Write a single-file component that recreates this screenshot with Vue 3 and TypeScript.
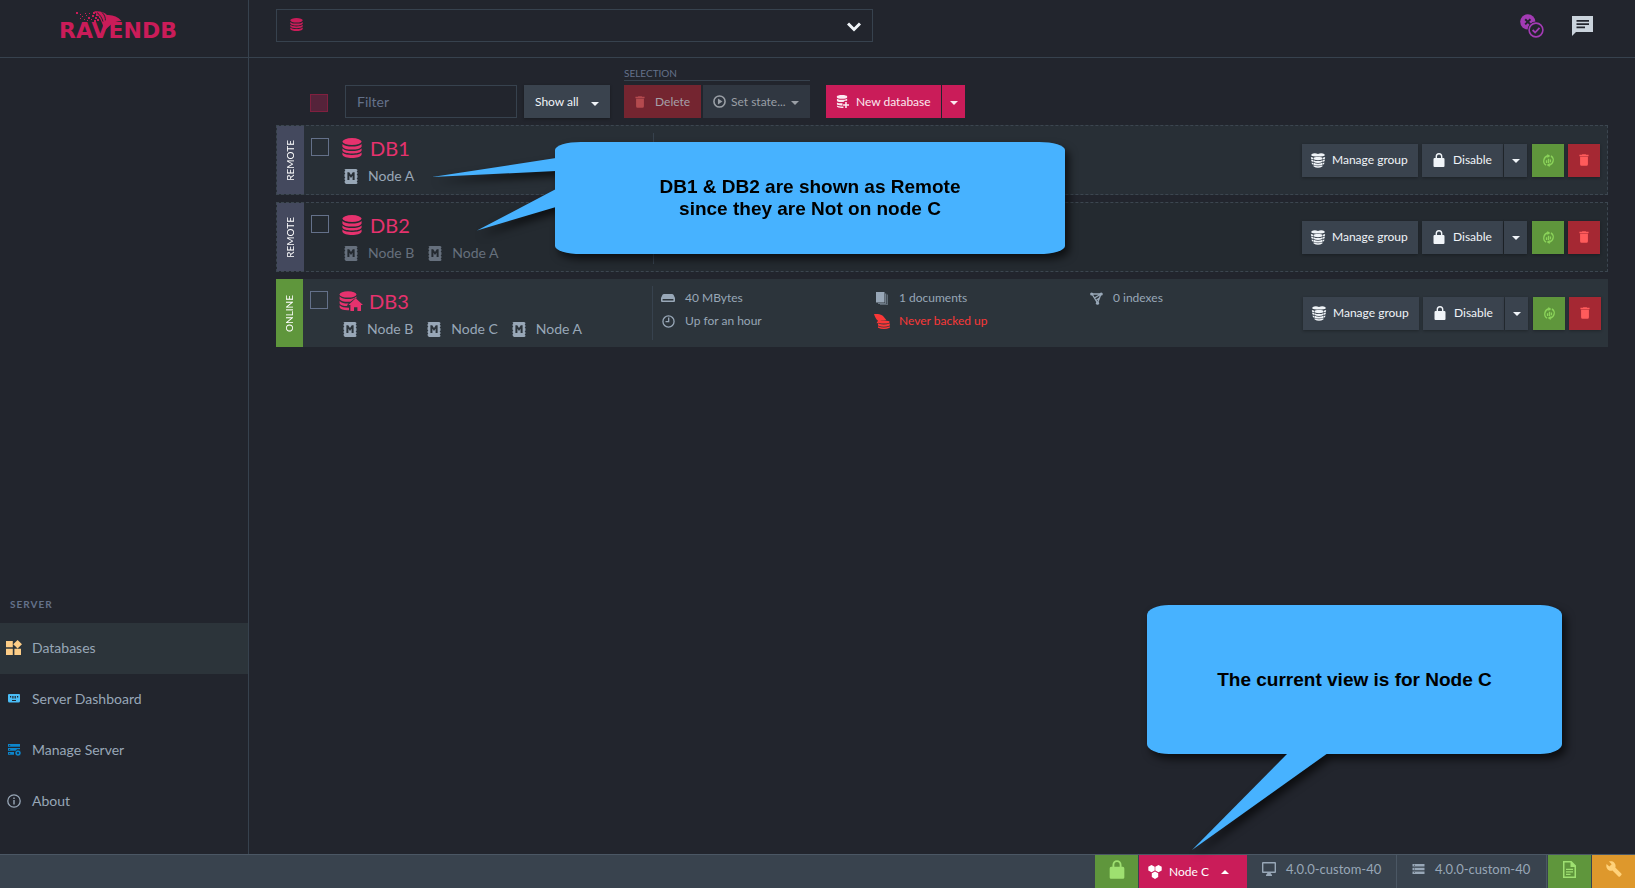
<script setup lang="ts">
import { ref } from 'vue'

interface Stat {
  icon: string
  text: string
  alert?: boolean
}

interface Database {
  name: string
  status: 'Remote' | 'Online'
  icon: string
  dimmed: boolean
  nodes: string[]
  stats: Stat[]
}

interface NavItem {
  label: string
  icon: string
  tone: string
  active: boolean
}

const filterText = ref('')

const navItems: NavItem[] = [
  { label: 'Databases', icon: 'tiles', tone: 'sand', active: true },
  { label: 'Server Dashboard', icon: 'gauge', tone: 'sky', active: false },
  { label: 'Manage Server', icon: 'server-gear', tone: 'azure', active: false },
  { label: 'About', icon: 'info', tone: 'plain', active: false },
]

const databases = ref<Database[]>([
  { name: 'DB1', status: 'Remote', icon: 'database', dimmed: false, nodes: ['A'], stats: [] },
  { name: 'DB2', status: 'Remote', icon: 'database', dimmed: true, nodes: ['B', 'A'], stats: [] },
  {
    name: 'DB3',
    status: 'Online',
    icon: 'database-home',
    dimmed: false,
    nodes: ['B', 'C', 'A'],
    stats: [
      { icon: 'drive', text: '40 MBytes' },
      { icon: 'documents', text: '1 documents' },
      { icon: 'index', text: '0 indexes' },
      { icon: 'clock', text: 'Up for an hour' },
      { icon: 'backup', text: 'Never backed up', alert: true },
    ],
  },
])

const logoDots: number[][] = [
  [76, 12, 2], [80, 14, 1], [82, 16, 1], [80, 18, 1], [85, 13, 1], [86, 15, 1], [84, 19, 1],
  [88, 17, 2], [89, 13, 1], [87, 20, 1], [91, 19, 1], [92, 15, 2], [93, 12, 2], [94, 20, 2],
  [95, 17, 2], [96, 14, 2], [97, 19, 2], [99, 17, 1],
]
</script>

<template>
  <svg class="sprite" aria-hidden="true">
    <symbol id="i-database" viewBox="0 0 20 20">
      <ellipse cx="10" cy="3.6" rx="9.6" ry="3.5" />
      <path d="M.4 6c2 2.200 5.600 2.600 9.600 2.600s7.600-.4 9.600-2.600v2.400c-1 2.300-5 3.100-9.600 3.100S1.400 10.700.4 8.400z" />
      <path d="M.4 10.400c2 2.200 5.600 2.500 9.600 2.500s7.600-.3 9.600-2.500v2.200c-1 2.300-5 3-9.600 3s-8.600-.7-9.600-3z" />
      <path d="M.4 14.600c2 2.200 5.600 2.400 9.600 2.400s7.600-.2 9.600-2.400v2.200c-1 2.300-5 3.200-9.600 3.200s-8.600-.9-9.600-3.200z" />
    </symbol>
    <symbol id="i-database-home" viewBox="0 0 24 20">
      <ellipse cx="9" cy="3.400" rx="8.400" ry="3.200" />
      <path d="M.6 5.600c2 2.100 5 2.500 8.400 2.500s6.400-.4 8.400-2.500v2l-1.400-.4-4.600 3.500c-5 .4-9.800-.4-10.800-2.800z" />
      <path d="M.6 10c2 2 5 2.600 9 2.500l-1.600 1.800.6.800C5 15.200 1.600 14.600.6 12.400z" />
      <path d="M.6 14.300c2 2 5 2.400 9.400 2.400v2.600c-5 .2-8.400-.6-9.400-3z" />
      <path d="M16.700 7.200 24 14h-2v6h-3.600v-3.800H15V20h-3.600v-6H9.400z" />
    </symbol>
    <symbol id="i-database-plus" viewBox="0 0 14 14">
      <path d="M1 1.500C1 .6 3.500 0 6.500 0S12 .6 12 1.500v1.200c0 .8-2.500 1.400-5.500 1.400S1 3.500 1 2.700z" />
      <path d="M1 4c1.500 1 3.500 1.200 5.500 1.200S10.500 5 12 4v2.300H9.500L8 7.500C4 7.900 1 7.400 1 6.300z" />
      <path d="M1 8c1.600.8 3.500 1 6 .9v2.300C4 11.400 1 11 1 10zM1 11.400c1.500.9 3.500 1 5.500 1H8V14H6.500C3.500 14 1 13.500 1 12.500z" />
      <path d="M9.900 7.500h1.700v2.400H14v1.700h-2.400V14H9.900v-2.400H7.600V9.900h2.300z" />
    </symbol>
    <symbol id="i-group" viewBox="0 0 16 16">
      <path d="M1 1.400Q4-.4 8 1q4-1.400 7 .4v1.500Q12 4 8 3.400 4 4 1 2.900z" />
      <path d="M.4 4.200 3 5v1.800L.6 6zM15.600 4.200 13 5v1.800l2.400-.8zM.6 7l2.400.8v1.800L1 8.900zM15.400 7l-2.400.8v1.800l2-.7zM1.200 10l1.800.7v1.800l-1.500-.7zM14.800 10l-1.800.7v1.800l1.500-.7z" />
      <ellipse cx="8" cy="5.900" rx="4.700" ry="1.800" />
      <path d="M3.300 7.600q4.700 2 9.400 0v2.100q-4.700 2-9.400 0zM3.300 10.400q4.700 2 9.400 0v2q-4.700 2-9.400 0zM3.300 13q4.700 2 9.400 0v1.300q-4.700 3-9.400 0z" />
    </symbol>
    <symbol id="i-node" viewBox="0 0 14 15">
      <path fill-rule="evenodd" d="M2 0h10q1.500 0 1.500 1.500l-.8 1 .8 1v1l-.8 1 .8 1v2l-.8 1 .8 1v1l-.8 1 .8 1q0 1.500-1.500 1.500H2Q.5 14 .5 12.500l.8-1-.8-1v-1l.8-1-.8-1v-2l.8-1-.8-1v-1l.8-1-.8-1Q.5 0 2 0zM3.400 11h2V6.700L7 9l1.600-2.300V11h2V3.200H8.800L7 6 5.200 3.200H3.400z" />
    </symbol>
    <symbol id="i-trash" viewBox="0 0 12 14">
      <path d="M4 0h4l.6.800H11.500v1.700H.5V.8h2.900zM1.300 3.200h9.400V12q0 2-1.700 2H3q-1.700 0-1.700-2z" />
    </symbol>
    <symbol id="i-play" viewBox="0 0 14 14">
      <circle cx="7" cy="7" r="6" fill="none" stroke="currentColor" stroke-width="1.700" />
      <path d="M5.300 3.700 10.200 7l-4.900 3.300z" />
    </symbol>
    <symbol id="i-lock" viewBox="0 0 12 14">
      <path fill-rule="evenodd" d="M2.600 5V3.600a3.400 3.600 0 0 1 6.800 0V5h1q1.100 0 1.100 1.200V13q0 1-1 1h-9q-1 0-1-1V6.200Q.5 5 1.600 5zM4 5h4V3.600a2 2.200 0 0 0-4 0z" />
    </symbol>
    <symbol id="i-refresh" viewBox="0 0 14 14">
      <path fill="none" stroke="currentColor" stroke-width="1.400" d="M4.300 12A5.600 5.600 0 0 1 6.500 1.900M9.700 2A5.600 5.600 0 0 1 7.500 12.100" />
      <path d="M5.800 0 9 2.100 5.800 4.300zM8.200 9.700 5 11.900 8.200 14zM4.200 6.800h1.400v3H4.200zM6.300 5h1.400v4.800H6.300zM8.400 6h1.400v3H8.400z" />
    </symbol>
    <symbol id="i-drive" viewBox="0 0 14 8">
      <path fill-rule="evenodd" d="M3 0h8q1 0 1.500.8L14 4v3q0 1-1 1H1q-1 0-1-1V4L1.500.8Q2 0 3 0zM1.600 5v1.400h10.800V5z" />
    </symbol>
    <symbol id="i-clock" viewBox="0 0 14 14">
      <circle cx="7" cy="7" r="6" fill="none" stroke="currentColor" stroke-width="1.400" />
      <path d="M6.500 2.800h1.400v5H3.800V6.500h2.700z" />
    </symbol>
    <symbol id="i-documents" viewBox="0 0 12 13">
      <path d="M0 0h8.500v10.500H0z" />
      <path d="M9.200 1.500h1v10.200H2v-.6h7.200z" opacity=".8" />
      <path d="M10.800 2.500h1V13H4v-.7h6.800z" opacity=".6" />
    </symbol>
    <symbol id="i-index" viewBox="0 0 13 13">
      <path fill="none" stroke="currentColor" stroke-width="1.300" d="M2 2h9M2 2l5.500 9L11 2M4.500 6 11 2M6 8.500l4-3" />
      <circle cx="1.700" cy="2" r="1.600" />
      <circle cx="11.200" cy="2" r="1.600" />
      <circle cx="7.500" cy="11.200" r="1.600" />
    </symbol>
    <symbol id="i-backup" viewBox="0 0 16 15">
      <path d="M0 0c4-.3 7 .2 9 2l3.500 4.300c-4-.2-7 .4-8 2.700l-2 .2L4 6.800C2 5.500.8 2.500 0 0z" />
      <ellipse cx="10" cy="8" rx="5.600" ry="1.500" />
      <path d="M4 9.300q6 2.500 11.800 0v2.200q-6 2.400-11.800 0zM4 12.200q6 2.500 11.800 0v1.600q-6 2.400-11.800 0z" />
    </symbol>
    <symbol id="i-tiles" viewBox="0 0 16 15">
      <path d="M0 1h6.800v6.300H0zM0 8.700h6.800V15H0zM8.400 8.700H15V15H8.400zM11.600 0 16 4.200l-4.400 4.200-4.400-4.200z" />
    </symbol>
    <symbol id="i-gauge" viewBox="0 0 12 9">
      <path fill-rule="evenodd" d="M1 0h10q1 0 1 1v6q0 1.500-1.500 1.500h-9Q0 8.500 0 7V1q0-1 1-1zM2 2v1.500h1.200V2zm2.300 0v2.500h1.200V2zm2.300 0v2.500h1.200V2zM9 2v1.500h1.200V2zM4 6v1h4V6z" />
    </symbol>
    <symbol id="i-server-gear" viewBox="0 0 13 12">
      <path fill-rule="evenodd" d="M0 0h12v2.800H0zM1 1v.8h1.200V1zM0 4h12v1.300L9 5.200 7.500 6.800H0zM1 5v.8h1.200V5zM0 8h6v2.800H0zM1 9v.8h1.200V9z" />
      <path fill-rule="evenodd" d="m10 6 .9.800 1.300-.1.100 1.300.7 1-.7 1-.1 1.300-1.300-.1-.9.800-.9-.8-1.300.1-.1-1.300-.7-1 .7-1 .1-1.300 1.300.1zM10 8a1 1 0 1 0 .01 0z" />
    </symbol>
    <symbol id="i-info" viewBox="0 0 14 14">
      <circle cx="7" cy="7" r="6.200" fill="none" stroke="currentColor" stroke-width="1.300" />
      <path d="M6.300 3.500h1.400v1.400H6.300zM6.300 6h1.400v4.500H6.300z" />
    </symbol>
    <symbol id="i-toggle" viewBox="0 0 24 24">
      <circle cx="7.800" cy="7.800" r="7.600" />
      <path fill="none" stroke="#22252d" stroke-width="2" d="m5.200 5.200 5.200 5.200M10.400 5.200l-5.200 5.200" />
      <circle cx="16" cy="16" r="8.400" fill="#22252d" />
      <circle cx="16" cy="16" r="6.900" fill="none" stroke="currentColor" stroke-width="1.600" />
      <path fill="none" stroke="currentColor" stroke-width="1.800" d="m12.600 16 2.500 2.500 4.400-4.600" />
    </symbol>
    <symbol id="i-chat" viewBox="0 0 21 20">
      <path fill-rule="evenodd" d="M0 0h21v16H4l-4 4zM4.500 4v1.800h12.500V4zm0 3.200V9h12.500V7.200zm0 3.200v1.800h8.500v-1.800z" />
    </symbol>
    <symbol id="i-nodes" viewBox="0 0 14 14">
      <path d="M3.500 0 6.700 1.800v3.600L3.500 7.200.3 5.400V1.800zM10.500 0l3.200 1.800v3.600l-3.200 1.800-3.200-1.800V1.800zM7 6.500l3.200 1.800v3.700L7 14l-3.200-2V8.300z" />
    </symbol>
    <symbol id="i-monitor" viewBox="0 0 14 14">
      <path fill-rule="evenodd" d="M1 0h12q1 0 1 1v9q0 1-1 1H8.500l1.500 2v1H4v-1l1.500-2H1q-1 0-1-1V1q0-1 1-1zM1.400 1.400v8.200h11.200V1.400z" />
    </symbol>
    <symbol id="i-stack" viewBox="0 0 12 10">
      <path d="M0 0h12v2.500H0zM0 3.700h12v2.500H0zM0 7.400h12v2.500H0z" />
      <path fill="#39434e" d="M1.600 .8h.8v.9h-.8zM1.600 4.500h.8v.9h-.8zM1.600 8.200h.8v.9h-.8z" />
    </symbol>
    <symbol id="i-file" viewBox="0 0 13 17">
      <path fill-rule="evenodd" d="M0 0h8.500L13 4.500V17H0zM1.500 1.500v14h10V6H7.500V1.500zM3 7.800v1.300h7V7.800zm0 2.500v1.300h7v-1.300zm0 2.500v1.200h4.500v-1.200z" />
    </symbol>
    <symbol id="i-wrench" viewBox="0 0 16 16">
      <path d="M.6 2.900 3.300 5.600 5.700 3.200 3 .5C5 0 7 .300 8.300 1.700c1.300 1.400 1.600 3.200 1 4.800l6 6q.8.8 0 1.500L14 15.400q-.8.800-1.500 0l-6-6c-1.700.7-3.500.3-4.800-1C.300 7 0 4.900.6 2.900z" />
    </symbol>
    <symbol id="i-caret" viewBox="0 0 8 4">
      <path d="M0 0h8L4 4z" />
    </symbol>
    <symbol id="i-caret-up" viewBox="0 0 8 4">
      <path d="M0 4h8L4 0z" />
    </symbol>
    <symbol id="i-chevron" viewBox="0 0 14 10">
      <path fill="none" stroke="currentColor" stroke-width="3" d="m1 1.500 6 6 6-6" />
    </symbol>
  </svg>

  <div class="studio">
    <header class="header">
      <a class="brand" href="#" aria-label="RavenDB home">
        <svg class="logo" viewBox="58 4 136 44" aria-hidden="true">
          <text x="59" y="38" class="logo-text">RAVENDB</text>
          <path class="logo-bird" d="M94 11.500c6-.6 10 .6 13 3.600 6-.4 10.500 1.600 14.500 5.900-4.500.4-8 1-10.500 3.500L104 31c-.4-3-.6-5-2-8-1.800-4.800-4-8.500-8-11.500z" />
          <path class="logo-gap" d="M97 12.600c3 2.200 5 5.200 6 9M102 12.400c2.600 2.500 3.400 5 3.400 8" />
          <rect v-for="(dot, i) in logoDots" :key="i" class="logo-dot" :x="dot[0]" :y="dot[1]" :width="dot[2]" :height="dot[2]" />
        </svg>
      </a>
      <div class="header-main">
        <div class="db-picker">
          <svg class="ico picker-icon" aria-hidden="true"><use href="#i-database" /></svg>
          <select class="picker-select" aria-label="Active database">
            <option value=""></option>
          </select>
          <svg class="ico picker-chevron" aria-hidden="true"><use href="#i-chevron" /></svg>
        </div>
        <div class="header-tools">
          <button type="button" class="tool" aria-label="Client status">
            <svg class="ico tool-toggle" aria-hidden="true"><use href="#i-toggle" /></svg>
          </button>
          <button type="button" class="tool" aria-label="Feedback">
            <svg class="ico tool-chat" aria-hidden="true"><use href="#i-chat" /></svg>
          </button>
        </div>
      </div>
    </header>

    <nav class="sidebar" aria-label="Server">
      <h2 class="nav-title">SERVER</h2>
      <a v-for="item in navItems" :key="item.label" href="#" class="nav-item" :class="{ active: item.active }">
        <span class="nav-icon" :class="item.tone">
          <svg class="ico" :class="'nav-' + item.icon" aria-hidden="true"><use :href="'#i-' + item.icon" /></svg>
        </span>
        {{ item.label }}
      </a>
    </nav>

    <main class="content">
      <div class="toolbar">
        <span class="check-all">
          <input type="checkbox" class="check check-pink" aria-label="Select all databases" />
        </span>
        <input v-model="filterText" type="text" class="filter" placeholder="Filter" aria-label="Filter" />
        <div class="show-all">
          <select class="show-select" aria-label="Database state">
            <option>Show all</option>
          </select>
          <svg class="ico caret show-caret" aria-hidden="true"><use href="#i-caret" /></svg>
        </div>
        <div class="selection">
          <span class="selection-title">SELECTION</span>
          <div class="selection-buttons">
            <button type="button" class="btn btn-delete" disabled>
              <svg class="ico ico-trash" aria-hidden="true"><use href="#i-trash" /></svg>
              Delete
            </button>
            <button type="button" class="btn btn-state" disabled>
              <svg class="ico ico-small" aria-hidden="true"><use href="#i-play" /></svg>
              Set state...
              <svg class="ico caret" aria-hidden="true"><use href="#i-caret" /></svg>
            </button>
          </div>
        </div>
        <div class="new-group">
          <button type="button" class="btn btn-new">
            <svg class="ico ico-small" aria-hidden="true"><use href="#i-database-plus" /></svg>
            New database
          </button>
          <button type="button" class="btn btn-pink-caret" aria-label="More ways to create a database">
            <svg class="ico caret" aria-hidden="true"><use href="#i-caret" /></svg>
          </button>
        </div>
      </div>

      <ul class="rows">
        <li v-for="db in databases" :key="db.name" class="row" :class="[db.status.toLowerCase(), { dimmed: db.dimmed }]">
          <div class="badge"><span>{{ db.status.toUpperCase() }}</span></div>
          <div class="identity">
            <input type="checkbox" class="check" :aria-label="'Select ' + db.name" />
            <div class="naming">
              <a href="#" class="name">
                <span class="name-icon">
                  <svg class="ico" :class="'name-' + db.icon" aria-hidden="true"><use :href="'#i-' + db.icon" /></svg>
                </span>
                {{ db.name }}
              </a>
              <div class="nodes">
                <a v-for="node in db.nodes" :key="node" href="#" class="node">
                  <svg class="ico node-icon" aria-hidden="true"><use href="#i-node" /></svg>
                  Node {{ node }}
                </a>
              </div>
            </div>
          </div>
          <div class="stats">
            <div v-for="stat in db.stats" :key="stat.text" class="stat" :class="{ alert: stat.alert }">
              <span class="stat-icon">
                <svg class="ico" :class="'stat-' + stat.icon" aria-hidden="true"><use :href="'#i-' + stat.icon" /></svg>
              </span>
              {{ stat.text }}
            </div>
          </div>
          <div class="actions">
            <button type="button" class="btn btn-manage">
              <svg class="ico ico-group" aria-hidden="true"><use href="#i-group" /></svg>
              Manage group
            </button>
            <div class="split">
              <button type="button" class="btn btn-disable">
                <svg class="ico ico-lock" aria-hidden="true"><use href="#i-lock" /></svg>
                Disable
              </button>
              <button type="button" class="btn btn-caret" aria-label="More actions">
                <svg class="ico caret" aria-hidden="true"><use href="#i-caret" /></svg>
              </button>
            </div>
            <button type="button" class="btn btn-icon btn-green" aria-label="Refresh statistics">
              <svg class="ico ico-refresh" aria-hidden="true"><use href="#i-refresh" /></svg>
            </button>
            <button type="button" class="btn btn-icon btn-red" :aria-label="'Delete ' + db.name">
              <svg class="ico ico-trash" aria-hidden="true"><use href="#i-trash" /></svg>
            </button>
          </div>
        </li>
      </ul>
    </main>

    <footer class="footer">
      <button type="button" class="foot foot-green" aria-label="Secure server">
        <svg class="ico foot-lock" aria-hidden="true"><use href="#i-lock" /></svg>
      </button>
      <button type="button" class="foot foot-node">
        <svg class="ico ico-nodes" aria-hidden="true"><use href="#i-nodes" /></svg>
        Node C
        <svg class="ico caret foot-caret" aria-hidden="true"><use href="#i-caret-up" /></svg>
      </button>
      <a href="#" class="foot foot-version">
        <svg class="ico ico-monitor" aria-hidden="true"><use href="#i-monitor" /></svg>
        4.0.0-custom-40
      </a>
      <a href="#" class="foot foot-version">
        <svg class="ico ico-stack" aria-hidden="true"><use href="#i-stack" /></svg>
        4.0.0-custom-40
      </a>
      <button type="button" class="foot foot-green" aria-label="License">
        <svg class="ico foot-file" aria-hidden="true"><use href="#i-file" /></svg>
      </button>
      <button type="button" class="foot foot-orange" aria-label="Support">
        <svg class="ico foot-wrench" aria-hidden="true"><use href="#i-wrench" /></svg>
      </button>
    </footer>

    <aside class="callout callout-remote">
      <svg class="tail tail-remote" viewBox="0 0 123 80" aria-hidden="true">
        <path d="M0 35 124 16v13zM45 88.500 124 47v18z" />
      </svg>
      <p>DB1 &amp; DB2 are shown as Remote<br />since they are Not on node C</p>
    </aside>

    <aside class="callout callout-node">
      <svg class="tail tail-node" viewBox="0 0 140 96" aria-hidden="true">
        <path d="M0 96 96-1h40z" />
      </svg>
      <p>The current view is for Node C</p>
    </aside>
  </div>
</template>

<style>
body {
  background: #22252d;
}
</style>

<style scoped>
.sprite {
  position: absolute;
  width: 0;
  height: 0;
}

.studio {
  position: relative;
  display: grid;
  grid-template-columns: 249px 1fr;
  grid-template-rows: auto 1fr auto;
  min-height: 100vh;
  background: #22252d;
  color: #98a7b7;
  font-family: Lato, 'Open Sans', sans-serif;
  font-size: 14px;
  line-height: 18px;
}

.studio *,
.studio *::before {
  box-sizing: border-box;
}

a {
  color: inherit;
  text-decoration: none;
}

button,
input,
select {
  margin: 0;
  padding: 0;
  border: 0;
  border-radius: 0;
  background: none;
  color: inherit;
  font: inherit;
  appearance: none;
}

.ico {
  display: block;
  flex: none;
  fill: currentColor;
}

/* header */
.header {
  grid-column: 1 / -1;
  display: grid;
  grid-template-columns: 249px 1fr;
  height: 58px;
  border-bottom: 1px solid #37424e;
}

.brand {
  padding: 4px 0 0 58px;
  border-right: 1px solid #37424e;
}

.logo {
  display: block;
  width: 136px;
  height: 44px;
}

.logo-text {
  font-family: 'DejaVu Sans', sans-serif;
  font-size: 22px;
  font-weight: 700;
  fill: #ca1c59;
}

.logo-bird,
.logo-dot {
  fill: #ca1c59;
}

.logo-gap {
  fill: none;
  stroke: #22252d;
  stroke-width: 1;
}

.header-main {
  display: flex;
  align-items: center;
  justify-content: space-between;
  padding: 0 42px 6px 27px;
}

.db-picker {
  position: relative;
  width: 597px;
  height: 33px;
  border: 1px solid #37424e;
}

.picker-select {
  width: 100%;
  height: 100%;
  padding: 0 40px;
}

.picker-icon,
.picker-chevron {
  position: absolute;
  pointer-events: none;
}

.picker-icon {
  top: 8px;
  left: 13px;
  width: 13px;
  height: 13px;
  color: #ca1c59;
}

.picker-chevron {
  top: 12px;
  right: 11px;
  width: 14px;
  height: 10px;
  color: #f0f4f8;
}

.header-tools {
  display: flex;
  align-items: center;
  gap: 28px;
}

.tool-toggle {
  width: 24px;
  height: 24px;
  color: #a33bb4;
}

.tool-chat {
  width: 21px;
  height: 20px;
  color: #cad3dc;
}

/* sidebar */
.sidebar {
  display: flex;
  flex-direction: column;
  justify-content: flex-end;
  padding-bottom: 27px;
  border-right: 1px solid #37424e;
}

.nav-title {
  margin: 0;
  padding: 0 10px 10px;
  color: #64718a;
  font-size: 10px;
  font-weight: 700;
  letter-spacing: 1px;
  line-height: 18px;
}

.nav-item {
  display: flex;
  align-items: center;
  gap: 4px;
  height: 51px;
  padding-bottom: 2px;
}

.nav-item.active {
  background: #2c343a;
}

.nav-icon {
  display: flex;
  justify-content: center;
  width: 28px;
}

.sand {
  color: #fdcd87;
}

.sky {
  color: #4abcf5;
}

.azure {
  color: #0d86cc;
}

.nav-tiles {
  width: 16px;
  height: 15px;
}

.nav-gauge {
  width: 12px;
  height: 9px;
}

.nav-server-gear {
  width: 13px;
  height: 12px;
}

.nav-info {
  width: 14px;
  height: 14px;
}

/* toolbar */
.content {
  padding: 8px 27px 24px;
}

.toolbar {
  display: flex;
  align-items: flex-end;
  padding-left: 34px;
}

.check {
  display: block;
  flex: none;
  width: 18px;
  height: 18px;
  border: 1px solid #64718a;
}

.check-all {
  display: flex;
  align-items: center;
  height: 33px;
  padding-top: 2px;
}

.check-pink {
  border-color: #80203f;
  background: #55233a;
}

.filter {
  width: 172px;
  height: 33px;
  margin-left: 17px;
  padding: 0 11px;
  border: 1px solid #37424e;
}

.filter::placeholder {
  color: #64718a;
  opacity: 1;
}

.btn,
.show-select {
  height: 33px;
  background: #3a434e;
  color: #f0f4f8;
  font-size: 12px;
  line-height: 16px;
}

.btn {
  display: flex;
  align-items: center;
  white-space: nowrap;
}

.show-all {
  position: relative;
  margin-left: 7px;
  box-shadow: 0 1px 3px rgba(0, 0, 0, 0.3);
}

.show-select {
  display: block;
  width: 86px;
  padding: 0 11px;
}

.caret {
  width: 8px;
  height: 4px;
}

.show-caret {
  position: absolute;
  top: 17px;
  right: 11px;
  color: #f0f4f8;
  pointer-events: none;
}

.selection {
  margin-left: 14px;
}

.selection-title {
  display: block;
  margin-bottom: 4px;
  border-bottom: 1px solid #37424e;
  color: #64718a;
  font-size: 10px;
  line-height: 14px;
}

.selection-buttons {
  display: flex;
  gap: 2px;
}

.btn-delete {
  gap: 10px;
  width: 77px;
  padding-left: 11px;
  background: #742530;
  color: #a5a0a8;
}

.btn-delete .ico {
  color: #b44a4e;
}

.btn-state {
  gap: 5px;
  width: 107px;
  padding-left: 10px;
  background: #303741;
  color: #9a9fa6;
}

.btn .caret {
  margin-top: 2px;
}

.new-group,
.split {
  display: flex;
  gap: 1px;
}

.new-group {
  margin-left: 16px;
}

.btn-new,
.btn-pink-caret {
  background: #ca1c59;
  color: #fbe9f0;
}

.btn-new {
  gap: 7px;
  width: 115px;
  padding-left: 10px;
}

.btn-pink-caret,
.btn-caret {
  justify-content: center;
  width: 23px;
}

.ico-small {
  width: 13px;
  height: 13px;
}

.ico-trash {
  width: 10px;
  height: 12px;
}

/* database rows */
.rows {
  display: grid;
  gap: 7px;
  margin: 7px 0 0;
  padding: 0;
  list-style: none;
}

.row {
  display: grid;
  grid-template-columns: 27px 349px 1fr auto;
  min-height: 68px;
  background: #2c343b;
}

.row.remote {
  min-height: 70px;
  border: 1px dashed #3c4650;
  background: #282f36;
}

.row.remote.dimmed {
  background: #242a30;
}

.badge {
  display: flex;
  align-items: center;
  justify-content: center;
  padding-right: 2px;
  color: #ffffff;
  font-size: 10px;
  line-height: 12px;
}

.badge span {
  writing-mode: vertical-rl;
  transform: rotate(180deg);
}

.remote .badge {
  background: #44495e;
}

.online .badge {
  background: #5f963c;
}

.identity {
  display: flex;
  gap: 8px;
  padding: 12px 0 0 7px;
}

.name {
  display: flex;
  align-items: center;
  gap: 3px;
  color: #e6326e;
  font-size: 20px;
  line-height: 18px;
}

.name-icon {
  display: flex;
  justify-content: center;
  width: 30px;
}

.name-database {
  width: 20px;
  height: 20px;
}

.name-database-home {
  width: 24px;
  height: 20px;
}

.nodes {
  display: flex;
  gap: 14px;
  padding: 9px 0 0 7px;
}

.node {
  display: flex;
  align-items: center;
  gap: 10px;
}

.node-icon {
  width: 14px;
  height: 15px;
}

.dimmed .node {
  color: #66707d;
}

.stats {
  display: grid;
  grid-template-columns: repeat(3, 1fr);
  align-content: start;
  row-gap: 5px;
  margin: 7px 0;
  padding: 3px 4px 0;
  border-left: 1px solid #37424e;
}

.stat {
  display: flex;
  align-items: center;
  gap: 6px;
  font-size: 12px;
  line-height: 18px;
}

.stat.alert {
  color: #fa3838;
}

.stat-icon {
  display: flex;
  justify-content: center;
  width: 22px;
}

.stat-drive {
  width: 14px;
  height: 8px;
}

.stat-clock,
.stat-index {
  width: 13px;
  height: 13px;
}

.stat-documents {
  width: 12px;
  height: 13px;
}

.stat-backup {
  width: 16px;
  height: 15px;
}

.actions {
  display: flex;
  align-items: center;
  padding-right: 7px;
  gap: 4px;
}

.actions .btn {
  box-shadow: 0 1px 3px rgba(0, 0, 0, 0.3);
}

.btn-manage {
  gap: 6px;
  width: 116px;
  padding-left: 8px;
}

.btn-disable {
  gap: 8px;
  width: 81px;
  padding-left: 11px;
}

.btn-icon {
  justify-content: center;
  width: 32px;
}

.split {
  margin-right: 1px;
}

.btn-green {
  background: #5f963c;
  color: #8bd35a;
}

.btn-red {
  background: #a52833;
  color: #ff5b5b;
}

.ico-group {
  width: 16px;
  height: 15px;
}

.ico-lock {
  width: 12px;
  height: 14px;
}

.ico-refresh {
  width: 13px;
  height: 13px;
}

/* footer */
.footer {
  grid-column: 1 / -1;
  display: flex;
  justify-content: flex-end;
  gap: 1px;
  height: 34px;
  border-top: 1px solid #4b5764;
  background: #39434e;
}

.foot {
  display: flex;
  align-items: center;
  white-space: nowrap;
}

.foot-green,
.foot-orange {
  justify-content: center;
  width: 43px;
  padding-bottom: 5px;
}

.foot-green {
  background: #5f963c;
  color: #9ee070;
}

.foot-orange {
  background: #de982c;
  color: #ffd27a;
}

.foot-node {
  gap: 7px;
  width: 108px;
  padding-left: 9px;
  background: #ca1c59;
  color: #ffffff;
  font-size: 12px;
}

.foot-caret {
  margin-left: 5px;
}

.foot-version {
  gap: 10px;
  width: 149px;
  padding: 0 0 6px 14px;
  border-right: 1px solid #4b5764;
  font-size: 13px;
}

.foot-lock {
  width: 16px;
  height: 19px;
}

.foot-file {
  width: 13px;
  height: 17px;
}

.ico-nodes,
.ico-monitor {
  width: 14px;
  height: 14px;
}

.foot-wrench {
  width: 16px;
  height: 16px;
}

.ico-stack {
  width: 13px;
  height: 10px;
}

/* annotation balloons */
.callout {
  position: absolute;
  display: flex;
  align-items: center;
  justify-content: center;
  background: #47b2ff;
  color: #000000;
  font-family: 'Liberation Sans', Arial, sans-serif;
  font-size: 19px;
  font-weight: 700;
  line-height: 22px;
  text-align: center;
  filter: drop-shadow(4px 5px 4px rgba(0, 0, 0, 0.65));
}

.callout p {
  margin: 0;
}

.callout-remote {
  top: 142px;
  left: 555px;
  width: 510px;
  height: 112px;
  border-radius: 26px / 8px;
}

.callout-node {
  right: 73px;
  bottom: 134px;
  width: 415px;
  height: 149px;
  border-radius: 22px / 10px;
}

.tail {
  position: absolute;
  overflow: visible;
  fill: #47b2ff;
}

.tail-remote {
  top: 0;
  right: 100%;
  width: 123px;
  height: 80px;
}

.tail-node {
  top: 100%;
  left: 45px;
  width: 140px;
  height: 96px;
}
</style>
